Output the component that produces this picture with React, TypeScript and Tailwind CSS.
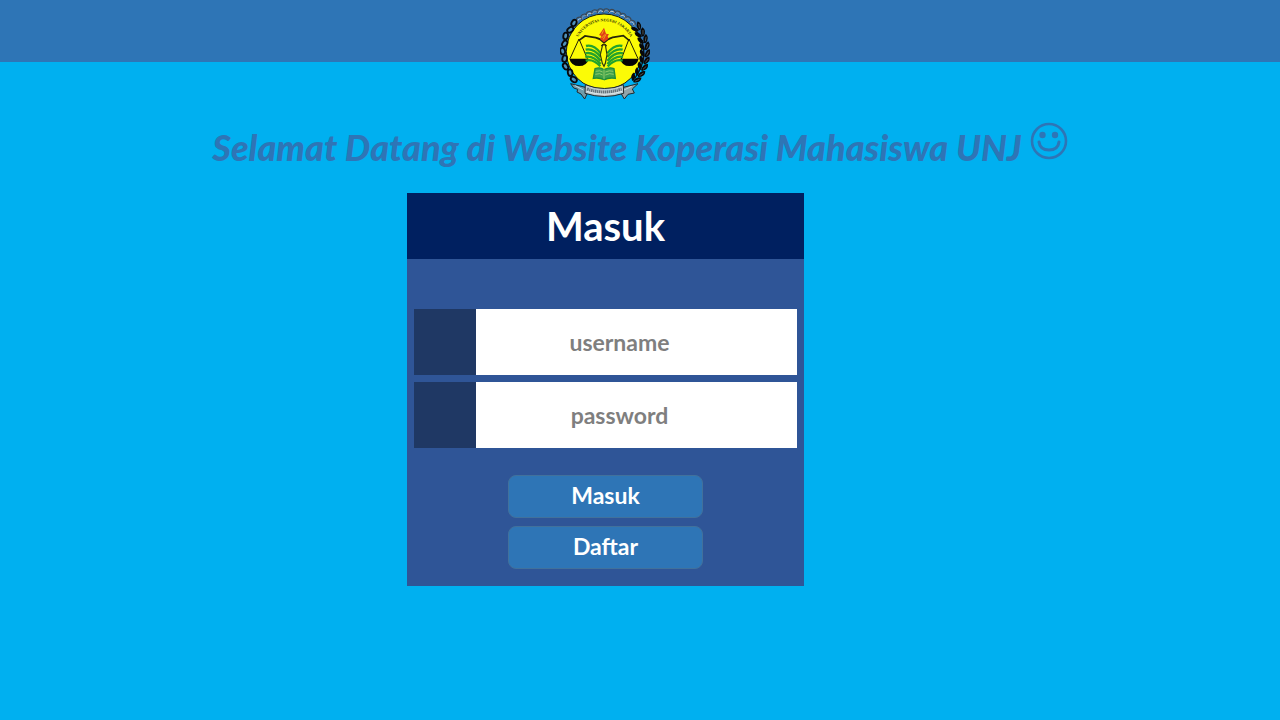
import React from "react";

const polar = (cx: number, cy: number, r: number, deg: number) => {
  const a = (deg * Math.PI) / 180;
  return { x: cx + r * Math.cos(a), y: cy + r * Math.sin(a) };
};

const chain = Array.from({ length: 9 }, (_, i) => 137 + i * 10.8);
const leaves = Array.from({ length: 9 }, (_, i) => -36 + i * 9.6);
const cogs = Array.from({ length: 12 }, (_, i) => -137 + i * 8.4);

function Emblem() {
  return (
    <svg
      role="img"
      aria-label="Universitas Negeri Jakarta"
      viewBox="30 24 276 276"
      className="size-[92px] shrink-0"
      fill="none"
    >
      {/* scalloped top edge */}
      {cogs.map((deg, i) => {
        const p = polar(162, 154, 122, deg);
        return (
          <g key={deg} transform={`translate(${p.x} ${p.y}) rotate(${deg + 90})`}>
            <path d="M-9 6L-7-4Q0-9 8-3L6 6" stroke="#3d4650" strokeWidth="3" />
            <path d="M-8 5Q-2-5 8 3" stroke={i % 2 ? "#d3d5d6" : "#929aa2"} strokeWidth="2.5" />
          </g>
        );
      })}
      <circle cx="162" cy="155" r="113" fill="#fbfb06" stroke="#1b1d12" strokeWidth="3" />
      <path id="emblem-arc" d="M84 113A88 88 0 0 1 242 113" />
      <text fontSize="12" fill="#30300a" className="font-bold [font-family:'Liberation_Serif',serif]">
        <textPath href="#emblem-arc" startOffset="50%" textAnchor="middle">
          UNIVERSITAS NEGERI JAKARTA
        </textPath>
      </text>

      {/* chain */}
      {chain.map((deg, i) => {
        const p = polar(162, 154, i % 2 ? 120 : 124, deg);
        return (
          <ellipse
            key={deg}
            cx={p.x}
            cy={p.y}
            rx="7"
            ry="10"
            transform={`rotate(${deg + (i % 2 ? 22 : -12)} ${p.x} ${p.y})`}
            fill="#4f91b8"
            stroke="#07090c"
            strokeWidth="5.5"
          />
        );
      })}

      {/* rice ear */}
      <path d="M252 82Q310 157 254 236" stroke="#101010" strokeWidth="4" />
      {leaves.map((deg) => {
        const p = polar(162, 156, 123, deg);
        return (
          <g key={deg} transform={`translate(${p.x} ${p.y}) rotate(${deg})`}>
            <path d="M-2 10Q-19 3-15-12Q-1-8 0 7Z" fill="#080808" />
            <path d="M0 9Q-1-10 13-15Q21 0 4 11Z" fill="#080808" />
            <path d="M5 5L11-7" stroke="#8b9094" strokeWidth="1.5" />
          </g>
        );
      })}

      {/* scales */}
      <path d="M86 122L105 108L137 113Q152 116 162 128Q172 116 188 112L220 107L238 122" stroke="#262609" strokeWidth="5" />
      <path d="M87 117L60 176M88 119L112 176M237 117L214 177M237 117L264 176" stroke="#202008" strokeWidth="3" />
      <path d="M58 176H116Q111 198 87 198Q64 198 58 176Z" fill="#050505" />
      <path d="M210 176H266Q261 198 238 198Q216 198 210 176Z" fill="#050505" />

      {/* flame */}
      <path d="M162 83L153 97L147 105L154 108L150 117L162 127L176 116L173 109L177 103L168 101Z" fill="#e13d17" />
      <path d="M161 91L155 103M168 103L160 118M155 114L165 103" stroke="#f7d616" strokeWidth="2" />

      {/* wings */}
      <g stroke="#22a32c" strokeWidth="7">
        <path d="M108 138Q131 132 152 160" />
        <path d="M107 149Q130 143 152 171" />
        <path d="M106 160Q129 154 152 182" />
        <path d="M106 171Q128 165 152 192" />
        <path d="M107 182Q129 175 151 199" />
        <path d="M217 138Q194 132 172 160" />
        <path d="M218 149Q195 143 172 171" />
        <path d="M219 160Q196 154 172 182" />
        <path d="M219 171Q197 165 172 192" />
        <path d="M218 182Q196 175 173 199" />
      </g>
      <path d="M158 134H166L171 164L166 190L162 199L157 190L151 164Z" fill="#fbfb06" stroke="#2c390d" strokeWidth="3.5" />
      <path d="M154 138Q162 129 170 138" stroke="#36300a" strokeWidth="4" />

      {/* book */}
      <path d="M135 206Q151 200 162 209Q178 200 192 206L196 235Q177 232 163 239Q147 232 130 235Z" fill="#41a14b" stroke="#208c39" strokeWidth="4" />
      <path d="M162 208V238M137 214Q150 210 158 216M136 223Q150 218 158 225M166 216Q178 210 190 214M166 225Q179 218 191 223" stroke="#b9e27a" strokeWidth="2" />

      {/* ribbon */}
      <path d="M62 251L106 262L112 280L104 297L93 282L81 276L83 268L71 264Z" fill="#6e9cab" stroke="#20282b" strokeWidth="3" />
      <path d="M264 251L221 262L213 280L223 297L234 283L253 279L247 267Z" fill="#91a5aa" stroke="#20282b" strokeWidth="3" />
      <path d="M106 254Q164 277 220 254L221 280Q164 299 105 280Z" fill="#becbd0" stroke="#20282b" strokeWidth="3" />
      <path d="M111 267Q164 285 215 267" stroke="#65727a" strokeWidth="9" strokeDasharray="5 2 3 2" />
      <path d="M110 274Q164 292 216 274M74 256L100 270M222 270L245 259" stroke="#eef5f6" strokeWidth="2" />
    </svg>
  );
}

function Smiley() {
  return (
    <svg aria-hidden="true" viewBox="0 0 38 38" className="mb-3 size-[38px] shrink-0" fill="none">
      <circle cx="19" cy="19" r="17" stroke="#2e75b6" strokeWidth="2.6" />
      <circle cx="12.5" cy="13" r="3.2" fill="#2e75b6" />
      <circle cx="25" cy="13" r="3.2" fill="#2e75b6" />
      <path d="M9 20Q10 28 19 28Q28 28 29 20" stroke="#2e75b6" strokeWidth="3" strokeLinecap="round" />
    </svg>
  );
}

function Field({ id, type, label }: { id: string; type: string; label: string }) {
  return (
    <div className="flex h-[66px] bg-white">
      <label htmlFor={id} aria-label={label} className="w-[62px] shrink-0 bg-[#1f3864]" />
      <input
        id={id}
        type={type}
        aria-label={label}
        placeholder={label}
        className="min-w-0 flex-1 bg-white pr-[34px] text-center text-[23px] font-bold text-[#404040] outline-none placeholder:text-[#7f7f7f] placeholder:opacity-100"
      />
    </div>
  );
}

const buttonClass =
  "h-[43px] w-[195px] rounded-lg border border-[#41719c] bg-[#2e75b6] pb-0.5 text-[23px] leading-none font-bold text-white";

export default function App() {
  return (
    <div className="min-h-screen bg-[#00b0f0] [font-family:Lato,sans-serif]">
      <header className="flex h-[62px] justify-center bg-[#2e75b6] pt-2 pr-[69px]">
        <Emblem />
      </header>
      <main>
        <div className="flex h-[131px] items-center justify-center gap-2 pt-[38px]">
          <h1 className="text-[36px] leading-none font-black whitespace-nowrap text-[#2e75b6] italic">
            Selamat Datang di Website Koperasi Mahasiswa UNJ
          </h1>
          <Smiley />
        </div>
        <div className="flex justify-center pr-[69px]">
          <form className="w-[397px] bg-[#2f5597] pb-[17px]" onSubmit={(e) => e.preventDefault()}>
            <h2 className="flex h-[66px] items-center justify-center bg-[#002060] text-[40px] leading-none font-bold text-white">
              Masuk
            </h2>
            <div className="flex flex-col gap-[7px] px-[7px] pt-[50px]">
              <Field id="username" type="text" label="username" />
              <Field id="password" type="password" label="password" />
            </div>
            <div className="flex flex-col items-center gap-2 pt-[27px]">
              <button type="submit" className={buttonClass}>
                Masuk
              </button>
              <button type="button" className={buttonClass}>
                Daftar
              </button>
            </div>
          </form>
        </div>
      </main>
    </div>
  );
}
